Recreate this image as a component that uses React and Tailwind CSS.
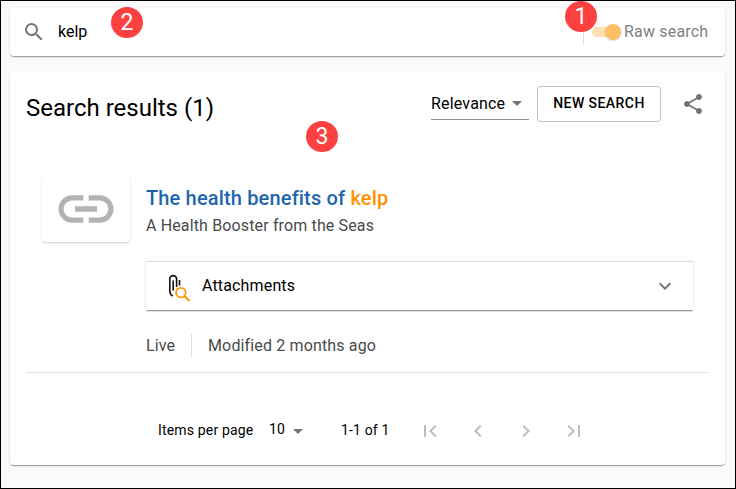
const CARD =
  'rounded bg-white shadow-[0_2px_1px_-1px_rgba(0,0,0,0.2),0_1px_1px_0_rgba(0,0,0,0.14),0_1px_3px_0_rgba(0,0,0,0.12)]';

function Icon({ d, className }) {
  return (
    <svg viewBox="0 0 24 24" fill="currentColor" className={className}>
      <path d={d} />
    </svg>
  );
}

const SEARCH =
  'M15.5 14h-.79l-.28-.27A6.471 6.471 0 0 0 16 9.5 6.5 6.5 0 1 0 9.5 16c1.61 0 3.09-.59 4.23-1.57l.27.28v.79l5 4.99L20.49 19l-4.99-5zm-6 0C7.01 14 5 11.99 5 9.5S7.01 5 9.5 5 14 7.01 14 9.5 11.99 14 9.5 14z';
const SHARE =
  'M18 16.08c-.76 0-1.44.3-1.96.77L8.91 12.7c.05-.23.09-.46.09-.7s-.04-.47-.09-.7l7.05-4.11c.54.5 1.25.81 2.04.81 1.66 0 3-1.34 3-3s-1.34-3-3-3-3 1.34-3 3c0 .24.04.47.09.7L8.04 9.81C7.5 9.31 6.79 9 6 9c-1.66 0-3 1.34-3 3s1.34 3 3 3c.79 0 1.5-.31 2.04-.81l7.12 4.16c-.05.21-.08.43-.08.65 0 1.61 1.31 2.92 2.92 2.92s2.92-1.31 2.92-2.92-1.31-2.92-2.92-2.92z';
const LINK =
  'M3.9 12c0-1.71 1.39-3.1 3.1-3.1h4V7H7c-2.76 0-5 2.24-5 5s2.24 5 5 5h4v-1.9H7c-1.71 0-3.1-1.39-3.1-3.1zM8 13h8v-2H8v2zm9-6h-4v1.9h4c1.71 0 3.1 1.39 3.1 3.1s-1.39 3.1-3.1 3.1h-4V17h4c2.76 0 5-2.24 5-5s-2.24-5-5-5z';
const EXPAND = 'M7.41 8.59 12 13.17l4.59-4.58L18 10l-6 6-6-6 1.41-1.41z';
const FIRST = 'M18.41 16.59 13.82 12l4.59-4.59L17 6l-6 6 6 6zM6 6h2v12H6z';
const PREV = 'M15.41 7.41 14 6l-6 6 6 6 1.41-1.41L10.83 12z';
const NEXT = 'M10 6 8.59 7.41 13.17 12l-4.58 4.59L10 18l6-6z';
const LAST = 'M5.59 7.41 10.18 12l-4.59 4.59L7 18l6-6-6-6zM16 6h2v12h-2z';

function Caret() {
  return (
    <svg viewBox="0 0 10 5" className="h-[5px] w-[10px] shrink-0 fill-[#757575]">
      <path d="M0 0h10L5 5z" />
    </svg>
  );
}

function Badge({ n, place }) {
  return (
    <div
      className={`absolute flex h-[31px] w-8 items-center justify-center rounded-[50%] bg-[#fd4141] text-[23px] leading-none text-white ${place}`}
    >
      {n}
    </div>
  );
}

function SearchBar() {
  return (
    <div className={`flex h-12 shrink-0 items-center pl-3 pr-4 ${CARD}`}>
      <Icon d={SEARCH} className="size-6 text-[#757575]" />
      <span className="ml-3 flex-1 text-base">kelp</span>
      <div className="h-[26px] w-px bg-[#dedede]" />
      <div className="ml-2 flex h-[10px] w-[26px] items-center justify-end rounded-full bg-[#ffdfb1]">
        <div className="-mr-[3px] size-4 shrink-0 rounded-full bg-[#ffbf66] shadow-[0_1px_2px_rgba(0,0,0,0.15)]" />
      </div>
      <span className="ml-[6px] w-[85px] whitespace-nowrap text-base tracking-[0.18px] text-[#7f7f7f]">Raw search</span>
    </div>
  );
}

function ResultsHeader() {
  return (
    <div className="flex h-[72px] items-start pt-[14px]">
      <h1 className="mt-1.5 flex-1 text-2xl leading-8">Search results (1)</h1>
      <div className="mt-[2px] flex h-8 w-[98px] items-center gap-2 border-b border-[#949494] text-base">
        <span className="w-[73px] tracking-[0.18px]">Relevance</span>
        <Caret />
      </div>
      <button className="ml-2 h-9 w-[124px] rounded border border-[#c0c0c0] pb-[3px] text-sm font-medium tracking-[0.45px]">
        NEW SEARCH
      </button>
      <Icon d={SHARE} className="ml-5 mr-1 mt-1.5 size-6 text-[#757575]" />
    </div>
  );
}

function AttachmentIcon() {
  return (
    <svg viewBox="0 0 24 28" className="h-7 w-6 overflow-visible" fill="none">
      <path
        d="M6.8 24C4.6 22.8 3.8 21.5 3.8 19V7a3.4 3.4 0 0 1 6.8 0V15M7.2 18.5V8.5M13.5 8V13.5"
        stroke="#111"
        strokeWidth="1.6"
      />
      <circle cx="14.9" cy="20.6" r="4.8" stroke="#ff9800" strokeWidth="1.7" />
      <path d="m18.3 24 5.2 5" stroke="#ff9800" strokeWidth="2" />
    </svg>
  );
}

function Result() {
  return (
    <div className="flex h-[229px] border-b border-[#e0e0e0] px-4">
      <div className="mt-8 flex h-[66px] w-[88px] shrink-0 items-center justify-center rounded bg-white shadow-[0_1px_2px_rgba(0,0,0,0.2)]">
        <Icon d={LINK} className="size-[66px] text-[#b3b3b3]" />
      </div>
      <div className="ml-4 flex flex-1 flex-col pt-10">
        <h2 className="text-xl leading-7 font-medium tracking-[0.16px] text-[#1d66ad]">
          The health benefits of <span className="text-[#ff9100]">kelp</span>
        </h2>
        <p className="text-base leading-7 tracking-[0.14px] text-[#4a4a4a]">A Health Booster from the Seas</p>
        <div className="mt-[21px] flex h-[49px] items-center border-t border-[#dcdcdc] bg-white pl-5 pr-4 shadow-[0_2px_1px_-1px_rgba(0,0,0,0.25),0_1px_1px_0_rgba(0,0,0,0.14),0_1px_2px_0_rgba(0,0,0,0.12)]">
          <AttachmentIcon />
          <span className="ml-3 flex-1 text-base tracking-[0.15px]">Attachments</span>
          <Icon d={EXPAND} className="size-6 text-[#757575]" />
        </div>
        <div className="mt-6 flex h-6 items-center text-base tracking-[0.15px] text-[#4a4a4a]">
          <span className="w-[29px]">Live</span>
          <div className="mx-4 h-6 w-px bg-[#dedede]" />
          <span>Modified 2 months ago</span>
        </div>
      </div>
    </div>
  );
}

function Paginator() {
  return (
    <div className="flex items-center pt-[46px] pl-[132px] text-sm">
      <span className="w-[111px] -translate-y-px tracking-[0.17px]">Items per page</span>
      <span className="w-6 -translate-y-0.5 tracking-[0.2px]">10</span>
      <Caret />
      <span className="ml-[38px] w-[77px] -translate-y-px tracking-[0.15px]">1-1 of 1</span>
      <div className="flex gap-6 text-[#bdbdbd]">
        <Icon d={FIRST} className="size-6" />
        <Icon d={PREV} className="size-6" />
        <Icon d={NEXT} className="size-6" />
        <Icon d={LAST} className="size-6" />
      </div>
    </div>
  );
}

export default function App() {
  return (
    <div className="relative flex h-[489px] w-[736px] flex-col gap-4 overflow-hidden border border-black bg-[#fafafa] pl-[9px] pr-[10px] pt-[7px] font-['Roboto',sans-serif] text-black">
      <SearchBar />
      <main className={`h-[393px] px-4 ${CARD}`}>
        <ResultsHeader />
        <Result />
        <Paginator />
      </main>
      <Badge n="1" place="left-[564px] top-0" />
      <Badge n="2" place="left-[110px] top-[6px]" />
      <Badge n="3" place="left-[305px] top-[120px]" />
    </div>
  );
}
